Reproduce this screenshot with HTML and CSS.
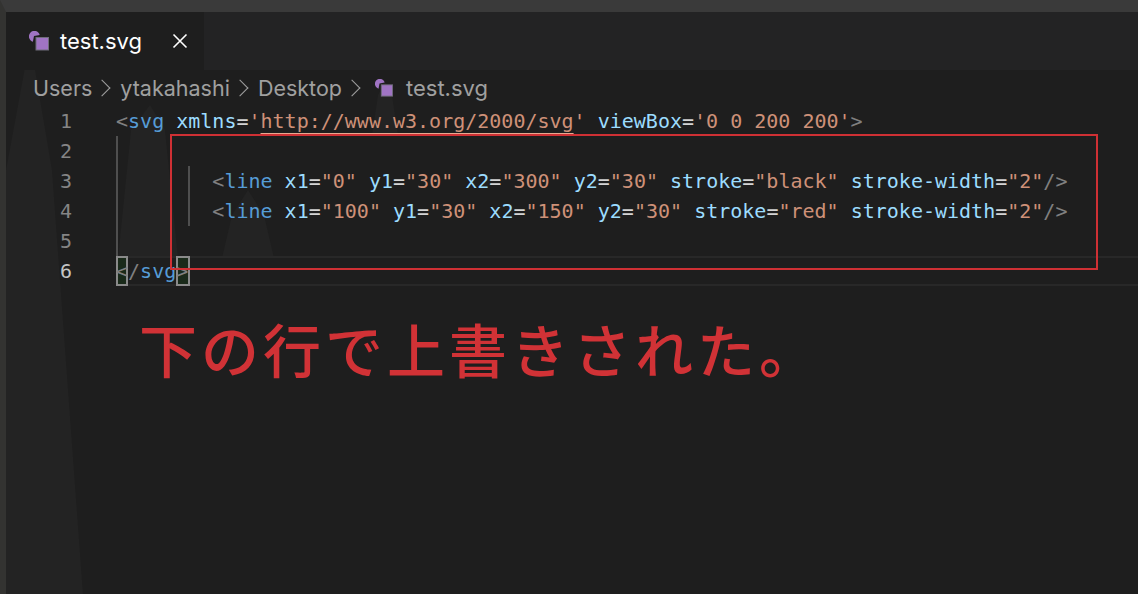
FILE: index.html
```html
<!DOCTYPE html>
<html lang="ja">
<head>
<meta charset="utf-8">
<title>test.svg</title>
<link rel="stylesheet" href="styles.css">
</head>
<body>
<div class="window">
  <svg class="streaks" width="1138" height="594" viewBox="0 0 1138 594" aria-hidden="true">
    <polygon points="6,594 6,170 30,40 52,170 83,594"/>
    <polygon points="118,258 131,130 150,105 165,130 178,258"/>
    <polygon points="222,258 232,215 248,190 264,215 274,258"/>
    <polygon points="372,135 378,95 385,82 392,95 398,135"/>
  </svg>
  <div class="tabbar">
    <div class="tab">
      <svg class="file-icon" width="20" height="20" viewBox="0 0 20 20" aria-hidden="true">
        <path class="icon-arc" d="M10.700 3.900A5.500 5.500 0 1 0 3.900 10.700L5 5Z"/>
        <rect class="icon-square" x="7" y="6.500" width="12.500" height="12.500"/>
      </svg>
      <span class="tab-name">test.svg</span>
      <svg class="close" width="16" height="16" viewBox="0 0 16 16" aria-hidden="true">
        <path d="M1.500 1.500l13 13M14.500 1.500l-13 13"/>
      </svg>
    </div>
  </div>
  <nav class="crumbs">
    <span>Users</span><span class="sep"></span>
    <span>ytakahashi</span><span class="sep"></span>
    <span>Desktop</span><span class="sep"></span>
    <svg class="file-icon small" width="18" height="18" viewBox="0 0 20 20" aria-hidden="true">
      <path class="icon-arc" d="M10.700 3.900A5.500 5.500 0 1 0 3.900 10.700L5 5Z"/>
      <rect class="icon-square" x="7" y="6.500" width="12.500" height="12.500"/>
    </svg>
    <span class="crumb-file">test.svg</span>
  </nav>
  <div class="editor">
    <div class="row"><span class="ln">1</span><code><i class="p">&lt;</i><i class="t">svg</i> <i class="a">xmlns</i><i class="e">=</i><i class="s">'<u>http://www.w3.org/2000/svg</u>'</i> <i class="a">viewBox</i><i class="e">=</i><i class="s">'0 0 200 200'</i><i class="p">&gt;</i></code></div>
    <div class="row"><span class="ln">2</span><code><b class="guide"></b></code></div>
    <div class="row"><span class="ln">3</span><code><b class="guide"></b><b class="guide inner"></b>        <i class="p">&lt;</i><i class="t">line</i> <i class="a">x1</i><i class="e">=</i><i class="s">"0"</i> <i class="a">y1</i><i class="e">=</i><i class="s">"30"</i> <i class="a">x2</i><i class="e">=</i><i class="s">"300"</i> <i class="a">y2</i><i class="e">=</i><i class="s">"30"</i> <i class="a">stroke</i><i class="e">=</i><i class="s">"black"</i> <i class="a">stroke-width</i><i class="e">=</i><i class="s">"2"</i><i class="p">/&gt;</i></code></div>
    <div class="row"><span class="ln">4</span><code><b class="guide"></b><b class="guide inner"></b>        <i class="p">&lt;</i><i class="t">line</i> <i class="a">x1</i><i class="e">=</i><i class="s">"100"</i> <i class="a">y1</i><i class="e">=</i><i class="s">"30"</i> <i class="a">x2</i><i class="e">=</i><i class="s">"150"</i> <i class="a">y2</i><i class="e">=</i><i class="s">"30"</i> <i class="a">stroke</i><i class="e">=</i><i class="s">"red"</i> <i class="a">stroke-width</i><i class="e">=</i><i class="s">"2"</i><i class="p">/&gt;</i></code></div>
    <div class="row"><span class="ln">5</span><code><b class="guide"></b></code></div>
    <div class="row current"><span class="ln">6</span><code><i class="p match">&lt;</i><i class="p">/</i><i class="t">svg</i><i class="p match end">&gt;</i></code></div>
  </div>
  <div class="frame"></div>
  <p class="note">下の行で上書きされた。</p>
</div>
</body>
</html>
```

FILE: styles.css
```css
*, *::before { box-sizing: border-box; }
html, body { margin: 0; padding: 0; }
body { background: #1e1e1e; overflow: hidden; }

.window {
  position: relative;
  width: 1138px;
  height: 594px;
  background: #1e1e1e;
  border-top: 12px solid #3a3a3a;
  border-left: 6px solid #333331;
  overflow: hidden;
  font-family: "Inter", "Liberation Sans", sans-serif;
}

.streaks { position: absolute; left: -6px; top: -12px; }
.streaks polygon { fill: #232323; }

.tabbar { position: relative; height: 58px; background: #232324; }
.tab {
  display: flex;
  align-items: center;
  width: 198px;
  height: 58px;
  padding: 0 0 1px 23px;
  background: #1e1e1e;
  color: #ffffff;
  font-size: 22px;
}
.file-icon { flex: none; }
.icon-arc { fill: #a074c4; }
.icon-square { fill: #a074c4; stroke: #6f6d7a; stroke-width: 1; }
.tab-name { margin-left: 11px; }
.close { margin-left: 30px; }
.close path { stroke: #ffffff; stroke-width: 1.600; fill: none; }

.crumbs {
  position: relative;
  display: flex;
  align-items: center;
  height: 36px;
  padding-left: 27px;
  color: #a0a0a0;
  font-size: 21.500px;
}
.sep {
  width: 12px;
  height: 12px;
  margin: 0 12px 0 4px;
  border-top: 1.500px solid #a0a0a0;
  border-right: 1.500px solid #a0a0a0;
  transform: rotate(45deg);
}
.file-icon.small { margin: 0 13px 0 5px; }
.crumb-file { font-size: 22px; }

.editor {
  position: relative;
  font-family: "DejaVu Sans Mono", monospace;
  font-size: 20px;
  line-height: 30px;
}
.row { position: relative; display: flex; height: 30px; }
.row.current::before {
  content: "";
  position: absolute;
  left: 110px;
  right: 0;
  top: 0;
  height: 30px;
  border-top: 2px solid #282828;
  border-bottom: 2px solid #282828;
}
.ln {
  flex: none;
  width: 66px;
  text-align: right;
  color: #858585;
}
.current .ln { color: #c6c6c6; }
code {
  position: relative;
  margin-left: 44px;
  font: inherit;
  white-space: pre;
}
code i { font-style: normal; }
.p { color: #808080; }
.t { color: #569cd6; }
.a { color: #9cdcfe; }
.e { color: #d4d4d4; }
.s { color: #ce9178; }
.s u {
  text-decoration-thickness: 1px;
  text-underline-offset: 5px;
  text-decoration-color: #e8a890;
}
.guide {
  position: absolute;
  left: 0;
  top: 0;
  width: 2px;
  height: 30px;
  background: #4f4f4f;
}
.guide.inner { left: 72px; }
.match {
  display: inline-block;
  position: relative;
  height: 30px;
  background: #1a2a1a;
  box-shadow: inset 0 0 0 2px #8a8a8a;
}
.match.end { padding-right: 2px; }

.frame {
  position: absolute;
  left: 164px;
  top: 122px;
  width: 928px;
  height: 136px;
  border: 2px solid #cf3034;
}
.note {
  position: absolute;
  left: 133px;
  top: 296px;
  margin: 0;
  color: #d13236;
  font-family: "Noto Sans CJK JP", sans-serif;
  font-size: 58px;
  font-weight: 500;
  letter-spacing: 4px;
  line-height: 80px;
  white-space: nowrap;
}
```
